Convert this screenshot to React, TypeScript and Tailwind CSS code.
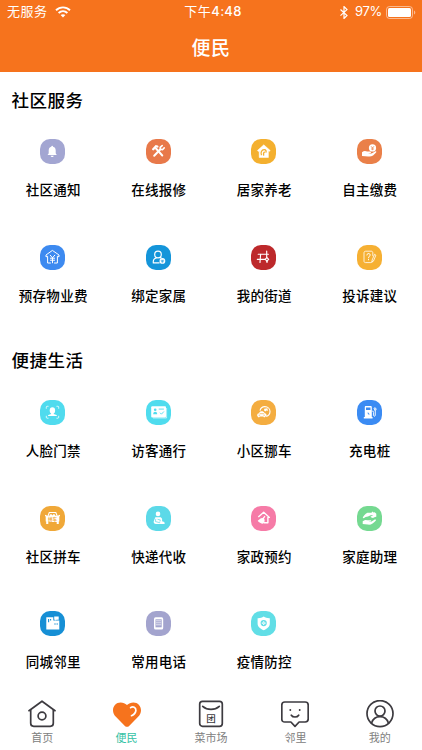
import type { ReactNode } from "react";

type Service = {
  label: string;
  color: string;
  icon: ReactNode;
};

const COMMUNITY: Service[] = [
  {
    label: "社区通知",
    color: "bg-[#a3a6d2]",
    icon: (
      <g fill="#fff">
        <path d="M12.2 6.8c.6 0 .8.4.9.9 1.8.5 2.6 1.9 2.6 3.7v2.6c0 .9.6 1.4 1.2 2.1H7.5c.6-.7 1.2-1.2 1.2-2.1v-2.6c0-1.8.8-3.2 2.600-3.700 0-.5.3-.9.9-.9z" />
        <path d="M10.700 16.700h3c-.2 1-.8 1.400-1.500 1.400s-1.300-.4-1.500-1.400z" />
      </g>
    ),
  },
  {
    label: "在线报修",
    color: "bg-[#e8794a]",
    icon: (
      <g stroke="#fff" fill="none" strokeLinecap="round">
        <path d="M7.200 10.200l2.800-3 1.400.3" strokeWidth="2.300" />
        <path d="M10 9.500l6.300 7" strokeWidth="1.900" />
        <path d="M8.200 16.700l6.200-6.500" strokeWidth="2" />
        <path d="M16.200 6.600l-2 1.800.3 2 2 .3 1.700-1.800" strokeWidth="1.600" />
      </g>
    ),
  },
  {
    label: "居家养老",
    color: "bg-[#f4b02f]",
    icon: (
      <>
        <path
          d="M12.800 5.800l6.400 5.700-.9 1-.9-.7v6.700H8.200v-6.700l-.9.7-.9-1z"
          fill="#fff"
          stroke="#fff"
          strokeWidth=".5"
          strokeLinejoin="round"
        />
        <path
          d="M10.500 16.200c-1.200-2.900.1-5.300 2.600-5.500 1.900-.1 2.500 1.600 1.600 3M12.700 16.600c-.5-1.900-.1-3.200 1-3.900"
          fill="none"
          stroke="#f4b02f"
          strokeWidth="1.300"
        />
      </>
    ),
  },
  {
    label: "自主缴费",
    color: "bg-[#ea8049]",
    icon: (
      <>
        <circle cx="15.500" cy="8.900" r="3.600" fill="#fff" />
        <path
          d="M13.900 7.100l1.600 1.700 1.600-1.700M15.500 8.800v2.400M14.100 9h2.800M14.100 10.200h2.800"
          stroke="#ea8049"
          strokeWidth=".6"
          fill="none"
        />
        <path
          d="M5 13.200c1.800-1.500 3.400-1.700 5.200-.6h2.900c1.200 0 1.300 1.300.2 1.500h-2.300c1.700.7 3.200.6 4.500-.2l2.600-1.500c1-.4 1.600.4 1 1.200-2.200 2.700-4.600 4.500-8 3.900L5 17z"
          fill="#fff"
        />
      </>
    ),
  },
  {
    label: "预存物业费",
    color: "bg-[#3d8af0]",
    icon: (
      <g fill="none" stroke="#fff" strokeWidth="1" strokeLinecap="round" strokeLinejoin="round">
        <path d="M10.500 18H7.600v-6.700l-1.600.5V10l6.400-4.600L19 10v1.800l-1.600-.5V18h-2.900" />
        <path d="M10.200 10.200l2.300 2.600 2.300-2.600M12.500 12.800v5M10.400 13.200h4.200M10.400 15.200h4.200" />
      </g>
    ),
  },
  {
    label: "绑定家属",
    color: "bg-[#1495da]",
    icon: (
      <>
        <g fill="none" stroke="#fff" strokeWidth="1.200" strokeLinecap="round">
          <circle cx="12" cy="9.500" r="3.300" />
          <path d="M13.200 17.800H7.300c-.4-2.700 1-4.400 3.300-5.100M14.300 12.600l.8.3" />
        </g>
        <circle cx="16.400" cy="15.900" r="2.900" fill="#fff" />
        <path d="M14.700 15.300h3.400M15 16.700h2.800M16.400 15.300v2.400" stroke="#1495da" strokeWidth=".6" />
      </>
    ),
  },
  {
    label: "我的街道",
    color: "bg-[#bd292b]",
    icon: (
      <g fill="none" stroke="#fff" strokeWidth="1.150" strokeLinecap="round">
        <path d="M7.200 9.200h10.200M6.300 14.300h7.500M9.600 9.200L9 17.500M15.700 6v6.500" />
        <path d="M15.900 12.600l1.700 1.700-1.700 1.800-1.700-1.800z" />
        <path d="M16 16.200v1.300" />
      </g>
    ),
  },
  {
    label: "投诉建议",
    color: "bg-[#f6b033]",
    icon: (
      <g fill="none" stroke="#fff" strokeWidth=".8" strokeLinecap="round" strokeLinejoin="round">
        <path d="M15.200 16.600c-.2.700-.6 1-1.300 1H8.500c-1 0-1.500-.6-1.500-1.500V7.900c0-1.100.6-1.700 1.700-1.700h5.500c1 0 1.600.6 1.600 1.600v3" />
        <path d="M9.900 10c0-2.100 3.300-2 3.200 0 0 1.300-1.600 1.400-1.600 2.800M11.500 14.500v.3" strokeWidth="1" />
        <path d="M17.900 9.500l1 .7-2.500 6-1.500.9.200-1.700z" />
      </g>
    ),
  },
];

const LIFE: Service[] = [
  {
    label: "人脸门禁",
    color: "bg-[#50dbee]",
    icon: (
      <>
        <path
          d="M6.300 8.700V7.200c0-.6.3-.9.900-.9h1.300M16.500 6.300h1.300c.6 0 .9.300.9.900v1.500M18.700 15.800v1.500c0 .6-.3.900-.9.900h-1.300M8.500 18.200H7.200c-.6 0-.9-.3-.9-.9v-1.500"
          fill="none"
          stroke="#fff"
          strokeWidth=".8"
        />
        <ellipse cx="12.400" cy="10.500" rx="2.700" ry="3.300" fill="#fff" />
        <path d="M11.100 12.500h2.600v1.400l2.800 1.100.5 1.100H7.900l.5-1.100 2.700-1.100z" fill="#fff" />
      </>
    ),
  },
  {
    label: "访客通行",
    color: "bg-[#4fdcee]",
    icon: (
      <>
        <rect x="5.200" y="6.200" width="14.800" height="11.200" rx="1" fill="#fff" />
        <path d="M20.600 8v10H7" fill="none" stroke="#fff" strokeWidth=".6" />
        <g fill="#4fdcee">
          <circle cx="9.200" cy="9.700" r="1.300" />
          <path d="M7.200 14.200c0-3.200 4-3.200 4 0z" />
        </g>
        <path d="M12.700 9.100h5.200M14 12.700l1.400 1.500 2.500-2.700" fill="none" stroke="#4fdcee" strokeWidth=".9" />
      </>
    ),
  },
  {
    label: "小区挪车",
    color: "bg-[#f4ad40]",
    icon: (
      <>
        <path
          d="M9 10.700c.5-2.600 2.400-4.100 4.900-4.100 2.900 0 5.100 2.200 5.100 5 0 2.500-1.500 4.300-3.800 4.800"
          fill="none"
          stroke="#fff"
          strokeWidth="1.100"
        />
        <path d="M13.200 8.700l3.300-.5.300 2.900-1.400-.7-1.100 1-1.200-1z" fill="#fff" />
        <path
          d="M6.200 15.200c0-1.200.7-1.600 1.800-1.900.7-1.500 1.300-2 2.700-2s2.200.6 3 2c1.300.2 1.800.8 1.800 1.900v1h-1l-.5 1h-1.200l-.4-.8h-3.600l-.5.8H7.100l-.4-1h-.5z"
          fill="#fff"
        />
        <path d="M8.700 13.700h4.200M7.600 15.200h1.500M12.400 15.200h1.500" stroke="#f4ad40" strokeWidth=".7" />
      </>
    ),
  },
  {
    label: "充电桩",
    color: "bg-[#3b8bf3]",
    icon: (
      <>
        <path d="M7.800 17V7.300c0-.8.400-1.200 1.200-1.200h4.600c.8 0 1.200.4 1.200 1.200V17h.8v1.400H6.800V17z" fill="#fff" />
        <rect x="9" y="7.500" width="4.500" height="2.500" fill="#3b8bf3" />
        <path d="M10.500 13h1v1.200h1" stroke="#3b8bf3" strokeWidth=".8" fill="none" />
        <path
          d="M14.800 11.200h.8c1 0 1 .5 1 1.300v2.800c0 1.300 1.700 1.200 1.700 0v-4.800l-1.200-1.800V8M17 8h1.700l.4 2h-2"
          stroke="#fff"
          strokeWidth=".9"
          fill="none"
        />
      </>
    ),
  },
  {
    label: "社区拼车",
    color: "bg-[#f0a838]",
    icon: (
      <>
        <path d="M8 10l1.300-3.500h6.500L17.200 10" fill="none" stroke="#fff" strokeWidth="1.100" />
        <path d="M9.500 10.200c0-2.600 2.900-2.600 2.900 0 0-2.600 3-2.600 3 0z" fill="#fff" />
        <path d="M5 8.800l2.500 1h10l2.500-1v1.300l-.7.500v4.900h-.5v2.600h-2.100v-2H8.300v2H6.200v-2.600h-.5v-4.900L5 10.100z" fill="#fff" />
        <text
          x="12.500"
          y="15.100"
          fontSize="4.500"
          fontWeight="700"
          textAnchor="middle"
          fill="#f0a838"
        >
          拼车
        </text>
      </>
    ),
  },
  {
    label: "快递代收",
    color: "bg-[#5cd9e8]",
    icon: (
      <>
        <circle cx="12" cy="7.900" r="2.300" fill="#fff" />
        <path
          d="M9.300 11.200h5.500l1.300 1.500v2.500l2.200.8.400 1.900H10c-1.700 0-2.500-1-2.300-2.400z"
          fill="#fff"
        />
        <path d="M9.800 12.800l-.4 2.700 4.700 1.300M11.500 13.300l2.800.6-.4 1.700" stroke="#5cd9e8" strokeWidth=".7" fill="none" />
      </>
    ),
  },
  {
    label: "家政预约",
    color: "bg-[#f67ba7]",
    icon: (
      <>
        <path
          d="M7.300 11l5.400-4.700 5.700 5.100h-1.500v5.400H13"
          fill="none"
          stroke="#fff"
          strokeWidth="1.400"
          strokeLinejoin="round"
        />
        <path d="M13.600 9.700l.8.700-1.400 2.300.6 1c.2 1.700-.4 2.900-1.500 4.100-2.200-.2-4.100-1.200-5.400-3l3.200-2.500 1.700-.3z" fill="#fff" />
      </>
    ),
  },
  {
    label: "家庭助理",
    color: "bg-[#75d991]",
    icon: (
      <g fill="#fff">
        <path d="M5.700 11.700c1-2.300 2.300-3.700 4.700-5h4l1.200-1.200.9 1 1.200-.2 1.600 1.500v3l-1.300.3c-1 .9-2.300 1-3.600.5l-1-.8 3-1.700-2.800.1-2.600 1.300-2.400.4-1.900 1.300z" />
        <path d="M5.700 15.300l2.400-1.400 2.800.3h2.800c.7.1.7 1 0 1.100h-2.300l2.700.4 3.700-2.200c1.100-.3 1.500.5.9 1.200-2.300 2.600-4.500 4.400-8 3.900l-5-.5z" />
      </g>
    ),
  },
  {
    label: "同城邻里",
    color: "bg-[#168fd5]",
    icon: (
      <>
        <path d="M6.300 6.200h7v3.200h6v9h-13z" fill="#fff" />
        <path d="M14.200 5.500h4.500v3.300h-2.200l-1.300 1v-1h-1z" fill="#fff" />
        <path d="M8.600 8v3.200M10.600 8v1.400M14.300 13h1.400M16.500 13h1.400" stroke="#168fd5" strokeWidth="1.100" />
      </>
    ),
  },
  {
    label: "常用电话",
    color: "bg-[#a3a4ce]",
    icon: (
      <>
        <rect x="8" y="6.300" width="9.200" height="12.200" rx="1.600" fill="#fff" />
        <rect x="9.500" y="8.300" width="6.200" height="8" fill="#a3a4ce" />
        <path d="M10 9.800h5.200M10 11.800h5.200M10 13.800h5.200" stroke="#fff" strokeWidth=".7" />
      </>
    ),
  },
  {
    label: "疫情防控",
    color: "bg-[#61dee6]",
    icon: (
      <>
        <path
          d="M12.700 5.500c1.800 1.300 3.700 1.800 6.100 1.700v5.200c0 3.200-2.700 5.200-6.100 6.900-3.400-1.700-6.100-3.700-6.100-6.900V7.200c2.400.1 4.300-.4 6.100-1.700z"
          fill="#fff"
        />
        <circle cx="12.700" cy="12.100" r="3.100" fill="#61dee6" />
        <path d="M12.700 10.200v3.800M10.800 12.100h3.800" stroke="#fff" strokeWidth="1.100" />
        <circle cx="12.700" cy="12.100" r=".5" fill="#61dee6" />
      </>
    ),
  },
];

// tab icons share a 28x28 canvas
const TABS: { label: string; icon: ReactNode }[] = [
  {
    label: "首页",
    icon: (
      <>
        <path d="M1 10.700L14 1.200l13 9.500" />
        <path d="M2.700 10v13.300c0 2 1 3 3 3h16.600c2 0 3-1 3-3V10" />
        <circle cx="14" cy="16" r="3.900" />
      </>
    ),
  },
  {
    label: "便民",
    icon: (
      <>
        <path
          d="M14 26.800c-.8 0-1.500-.3-2.100-.9L3.100 17C.9 14.800 0 12.700 0 10.200 0 5.900 3.200 2.400 7.600 2.400c2.500 0 4.500.8 6.400 2.700 1.900-1.900 3.900-2.700 6.400-2.700 4.400 0 7.600 3.500 7.600 7.800 0 2.500-.9 4.600-3.100 6.800L16.100 25.900c-.6.600-1.300.9-2.100.9z"
          fill="#f6731d"
          stroke="none"
        />
        <path d="M17.600 7.700c2.400-1.900 5.400-.5 5.300 2.700-.1 2.200-1.900 4.200-4.400 5.300" stroke="#fff" strokeWidth="1.700" />
      </>
    ),
  },
  {
    label: "菜市场",
    icon: (
      <>
        <rect x="2.700" y="1.300" width="22.600" height="25" rx="2.800" />
        <path d="M5.700 6.300c4.400 4 12.200 4 16.600 0" />
        <text
          x="14"
          y="21.500"
          fontSize="9.500"
          fontWeight="500"
          textAnchor="middle"
          fill="#3d3b40"
          stroke="none"
        >
          团
        </text>
      </>
    ),
  },
  {
    label: "邻里",
    icon: (
      <>
        <path d="M3.800 2h20.400c2 0 3 1 3 3v14c0 2-1 3-3 3h-6.100L14 26.300 9.900 22H3.800c-2 0-3-1-3-3V5c0-2 1-3 3-3z" />
        <path d="M10.300 15.200c1.600 2.400 5.800 2.400 7.400 0" />
        <path d="M9.300 10v.1M18.700 10v.1" strokeWidth="1.900" />
      </>
    ),
  },
  {
    label: "我的",
    icon: (
      <>
        <circle cx="14" cy="13.600" r="13" />
        <circle cx="14" cy="11" r="5" />
        <path d="M5.600 23c1.400-4.300 4.200-6.300 8.400-6.300s7 2 8.400 6.300" />
      </>
    ),
  },
];

export default function App() {
  return (
    <div className="flex h-[750px] w-[422px] flex-col overflow-hidden bg-white font-['Noto_Sans_CJK_SC',sans-serif] text-black">
      <header className="h-[72px] shrink-0 bg-[#f6731d] text-white">
        <StatusBar />
        <h1 className="flex h-[46px] items-center justify-center text-[19px] font-medium tracking-[0.5px]">
          便民
        </h1>
      </header>

      <main className="min-h-0 flex-1 overflow-hidden">
        <h2 className="flex h-[56px] items-center pl-[11.5px] text-[17.5px] font-medium tracking-[0.5px]">
          社区服务
        </h2>
        <ServiceGrid items={COMMUNITY} />
        <h2 className="flex h-[50px] items-center pb-[7px] pl-[11.5px] text-[17.5px] font-medium tracking-[0.5px]">
          便捷生活
        </h2>
        <ServiceGrid items={LIFE} />
      </main>

      <nav className="grid h-[50px] shrink-0 grid-cols-5 bg-white">
        {TABS.map((tab) => (
          <button key={tab.label} className="flex flex-col items-center">
            <svg
              viewBox="0 0 28 28"
              className="size-[28px] shrink-0"
              fill="none"
              stroke="#3d3b40"
              strokeWidth="1.700"
              strokeLinecap="round"
              strokeLinejoin="round"
            >
              {tab.icon}
            </svg>
            <span
              className={
                tab.label === "便民"
                  ? "mt-[2px] text-[11px] leading-[14px] text-[#35c2a5]"
                  : "mt-[2px] text-[11px] leading-[14px] text-[#808080]"
              }
            >
              {tab.label}
            </span>
          </button>
        ))}
      </nav>
    </div>
  );
}

function ServiceGrid({ items }: { items: Service[] }) {
  return (
    <div className="grid auto-rows-[105.5px] grid-cols-4">
      {items.map((item) => (
        <button key={item.label} className="flex flex-col items-center pt-[11px]">
          <span className={`size-[25px] shrink-0 rounded-[10px] ${item.color}`}>
            <svg viewBox="0 0 25 25" className="size-[25px]">
              {item.icon}
            </svg>
          </span>
          <span className="mt-[15px] pl-[1px] text-[13.5px] leading-[20px] font-medium tracking-[0.3px] whitespace-nowrap">
            {item.label}
          </span>
        </button>
      ))}
    </div>
  );
}

function StatusBar() {
  return (
    <div className="grid h-[24px] grid-cols-3 items-center pr-[6px] pl-[7px] font-[Inter,'Noto_Sans_CJK_SC',sans-serif] text-[13px]">
      <div className="flex items-center gap-[7px]">
        <span className="tracking-[0.5px]">无服务</span>
        <svg viewBox="0 0 16 12" className="h-[12px] w-[16px]" fill="none" stroke="#fff">
          <path d="M1 4.300c4-3.900 10-3.900 14 0" strokeWidth="1.900" />
          <path d="M3.600 7c2.600-2.500 6.200-2.500 8.800 0" strokeWidth="1.900" />
          <path d="M5.600 9.100L8 11.500l2.400-2.400c-1.400-1.300-3.400-1.300-4.800 0z" fill="#fff" stroke="none" />
        </svg>
      </div>
      <span className="justify-self-center pl-[3px] whitespace-nowrap">
        <span className="tracking-[0.5px]">下午</span>
        <span className="font-medium tracking-[0.3px]">4:48</span>
      </span>
      <div className="flex items-center justify-end">
        <svg
          viewBox="0 0 8 13"
          className="mr-[7px] h-[13px] w-[8px]"
          fill="none"
          stroke="#fff"
          strokeWidth="1.2"
        >
          <path d="M.5 3.500l6.500 6-3 3V.600l3 3-6.500 6" />
        </svg>
        <span className="tracking-[-0.3px]">97%</span>
        <svg viewBox="0 0 30 13" className="ml-[4px] h-[13px] w-[30px]">
          <rect x=".5" y=".5" width="26" height="12" rx="3" fill="none" stroke="#fff" strokeOpacity=".5" />
          <rect x="2" y="2" width="23" height="9" rx="1.500" fill="#fff" />
          <path d="M28 4.500c1.800.8 1.800 3.200 0 4z" fill="#fff" fillOpacity=".5" />
        </svg>
      </div>
    </div>
  );
}
